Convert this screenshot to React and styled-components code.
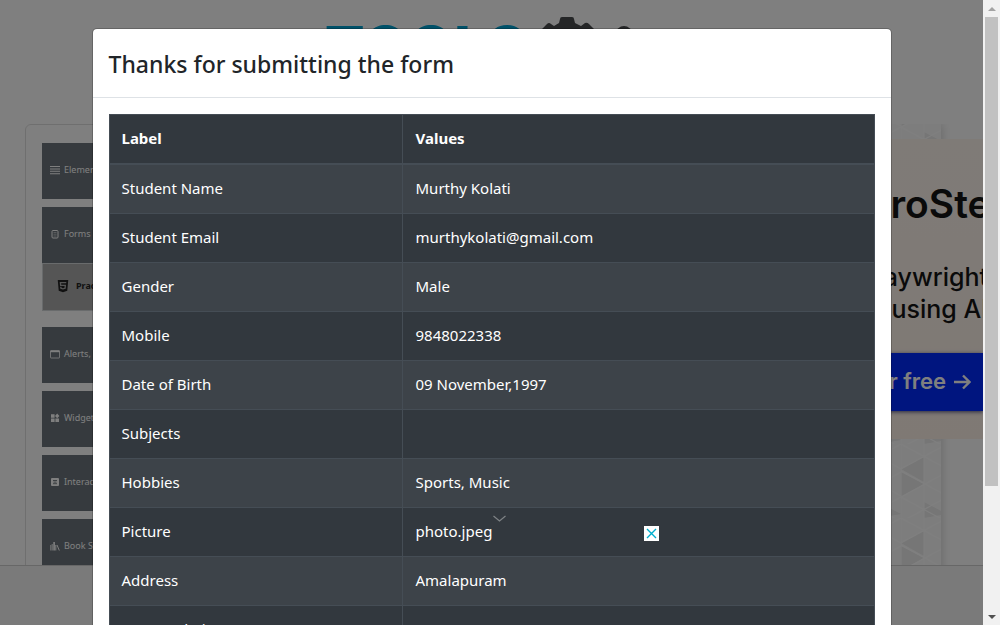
import React from "react";
import styled, { createGlobalStyle } from "styled-components";
import { FaHtml5 } from "react-icons/fa";

const GlobalStyle = createGlobalStyle`
  *, *::before, *::after { box-sizing: border-box; }
  body {
    margin: 0;
    font-family: "Noto Sans", "Open Sans", sans-serif;
    font-size: 15px;
    line-height: 24px;
    color: #212529;
    background: #fff;
  }
`;

const Window = styled.div`
  display: grid;
  grid-template-columns: minmax(0, 1fr) 17px;
  height: 100vh;
  overflow: hidden;
`;

const Viewport = styled.div`
  position: relative;
  overflow: hidden;
`;

const Page = styled.div`
  display: flex;
  flex-direction: column;
  height: 100%;
`;

const SiteHeader = styled.header`
  display: flex;
  justify-content: center;
  flex: none;
  height: 124px;
  padding: 16px 12px 0 0;
`;

const Brand = styled.a`
  display: flex;
  align-items: flex-start;
  color: #00a3d2;
  text-decoration: none;
  font: 800 59px/64px Inter, sans-serif;
`;

const BrandMark = styled.svg`
  width: 104px;
  height: 60px;
  margin-left: 16px;
`;

const Main = styled.main`
  display: grid;
  grid-template-columns: minmax(0, 1fr) 240px;
  flex: 1;
  min-height: 0;
  overflow: hidden;
  padding-left: 25px;
`;

const Card = styled.nav`
  height: 900px;
  padding: 18px 16px;
  border: 1px solid #dfdfdf;
  border-radius: 6px;
`;

const Menu = styled.ul`
  display: flex;
  flex-direction: column;
  gap: 8px;
  width: 240px;
  margin: 0;
  padding: 0;
  list-style: none;
`;

const MenuGroup = styled.li`
  padding-bottom: ${(p) => (p.$open ? "8px" : "0")};
`;

const MenuButton = styled.button`
  display: flex;
  align-items: center;
  gap: 4px;
  width: 100%;
  height: 56px;
  padding: 0 8px 2px;
  border: 0;
  background: #6c757c;
  color: #fff;
  font: 400 9px/16px "Noto Sans", sans-serif;
  text-align: left;

  svg { width: 10px; height: 10px; }
`;

const SubLink = styled.a`
  display: flex;
  align-items: center;
  gap: 6px;
  height: 48px;
  padding: 0 13px 2px;
  border: 1px solid #d3d6d8;
  background: #aaa;
  color: #222;
  font: 700 9px/16px "Noto Sans", sans-serif;
  text-decoration: none;

  svg { width: 14px; height: 14px; }
`;

const SideAd = styled.aside`
  position: relative;
  padding-top: 15px;
  overflow: hidden;
`;

const Skin = styled.div`
  position: absolute;
  inset: 0 42px 0 0;
  box-shadow: 0 0 10px rgba(0, 0, 0, 0.2);

  svg { display: block; width: 100%; height: 100%; background: #fbfbfb; }
`;

const Creative = styled.section`
  position: relative;
  height: 300px;
  padding-top: 41px;
  background: linear-gradient(#fff6ef, #fff3e9);
  color: #151515;
  font-family: Inter, sans-serif;
  text-align: right;
  white-space: nowrap;
`;

const CreativeTitle = styled.h2`
  width: 272px;
  margin: 0 0 33px;
  font-size: 39px;
  line-height: 48px;
  font-weight: 600;
`;

const CreativeText = styled.p`
  width: 245px;
  margin: 0 0 28px;
  font-size: 25px;
  line-height: 32px;
  font-weight: 500;
`;

const CreativeLink = styled.a`
  display: block;
  height: 58px;
  padding-right: 12px;
  background: #002aff;
  box-shadow: 0 1px 4px #4d5080;
  color: #fff;
  font-size: 22px;
  line-height: 56px;
  font-weight: 600;
  text-decoration: none;

  svg { margin-left: 8px; vertical-align: -1px; }
`;

const SiteFooter = styled.footer`
  flex: none;
  height: 60px;
  border-top: 1px solid #cfcfcf;
  background: #f5f5f5;
`;

const Backdrop = styled.div`
  position: absolute;
  inset: 0;
  padding: 28px 16px;
  overflow: hidden;
  background: rgba(0, 0, 0, 0.5);
`;

const Dialog = styled.div`
  max-width: 800px;
  margin: 0 auto;
  border: 1px solid rgba(0, 0, 0, 0.2);
  border-radius: 5px;
  background: #fff;
  background-clip: padding-box;
`;

const DialogHeader = styled.header`
  padding: 17px 16px 15px;
  border-bottom: 1px solid #dee2e6;
`;

const DialogTitle = styled.h1`
  margin: 0;
  font-size: 23px;
  line-height: 36px;
  font-weight: 500;
`;

const DialogBody = styled.div`
  padding: 16px;
`;

const ResultTable = styled.table`
  width: 100%;
  border-collapse: collapse;
  table-layout: fixed;
  background: #32383e;
  color: #fff;
  border: 1px solid #454d55;

  th, td {
    padding: 11px 12px 13px;
    border: 1px solid #454d55;
    text-align: left;
    vertical-align: top;
  }
  th + th, td + td { padding-left: 13px; }
  thead th { border-bottom-width: 2px; font-weight: 700; }
  tbody tr:nth-of-type(odd) { background: #3d4349; }
`;

const LabelColumn = styled.col`
  width: 293px;
`;

const AnchorControls = styled.div`
  position: absolute;
  left: 50%;
  bottom: 84px;
  display: flex;
  align-items: flex-end;
  justify-content: space-between;
  width: 167px;
  height: 30px;
`;

const IconButton = styled.button`
  display: grid;
  place-items: center;
  padding: 0;
  border: 0;
  width: 15px;
  height: 15px;
  align-self: ${(p) => (p.$top ? "flex-start" : "flex-end")};
  background: ${(p) => (p.$filled ? "#fff" : "transparent")};
`;

const Scrollbar = styled.div`
  display: flex;
  flex-direction: column;
  background: #f1f1f1;
`;

const ScrollButton = styled.button`
  display: grid;
  place-items: center;
  flex: none;
  height: 17px;
  padding: 0;
  border: 0;
  background: transparent;
  color: ${(p) => (p.$muted ? "#a3a3a3" : "#505050")};
`;

const Track = styled.div`
  flex: 1;
  padding: 0 2px;
`;

const Thumb = styled.div`
  height: 79.4%;
  background: #c1c1c1;
`;

const LinesIcon = () => (
  <svg viewBox="0 0 10 10" fill="currentColor" aria-hidden="true">
    <path d="M0 1h10v1H0zM0 3.400h10v1H0zM0 5.800h10v1H0zM0 8.200h10v1H0z" />
  </svg>
);

const FormIcon = () => (
  <svg viewBox="0 0 10 10" fill="none" stroke="currentColor" aria-hidden="true">
    <rect x="2" y="1.5" width="6" height="7.5" rx="1" />
    <path d="M3.5 3.5h3M3.5 5.2h3M3.5 7h3" strokeWidth=".5" />
  </svg>
);

const WindowIcon = () => (
  <svg viewBox="0 0 10 10" fill="none" stroke="currentColor" strokeWidth=".8" aria-hidden="true">
    <rect x=".5" y="1.5" width="9" height="7.5" rx=".5" />
    <path d="M.5 2.5h9" strokeWidth="1.4" />
  </svg>
);

const WidgetsIcon = () => (
  <svg viewBox="0 0 10 10" fill="currentColor" aria-hidden="true">
    <path d="M1 1.200h3.600v3.600H1zM1 5.400h3.600V9H1zM5.400 5.400H9V9H5.400zM7.200.6 9.400 3 7.200 5.200 5 3z" />
  </svg>
);

const InteractionIcon = () => (
  <svg viewBox="0 0 10 10" aria-hidden="true">
    <rect x="1" y="1" width="8" height="8" rx="1" fill="currentColor" />
    <path d="M3 3.500h4M3 6.700h4M3.500 5.100h3" fill="none" stroke="#6c757c" strokeWidth=".9" />
  </svg>
);

const BooksIcon = () => (
  <svg viewBox="0 0 10 10" fill="none" stroke="currentColor" aria-hidden="true">
    <path d="M.8 4v5.500M2.200 3v6.500" strokeWidth=".9" />
    <path d="M4.100 1v8.500" strokeWidth="1.6" />
    <path d="M5.800 4v5.500M7 4l2.300 5.500" strokeWidth="1" />
  </svg>
);

const MENU = [
  { label: "Elements", Icon: LinesIcon },
  { label: "Forms", Icon: FormIcon, child: "Practice Form" },
  { label: "Alerts, Frame & Windows", Icon: WindowIcon },
  { label: "Widgets", Icon: WidgetsIcon },
  { label: "Interactions", Icon: InteractionIcon },
  { label: "Book Store Application", Icon: BooksIcon },
];

const RESULTS = [
  ["Student Name", "Murthy Kolati"],
  ["Student Email", "murthykolati@gmail.com"],
  ["Gender", "Male"],
  ["Mobile", "9848022338"],
  ["Date of Birth", "09 November,1997"],
  ["Subjects", ""],
  ["Hobbies", "Sports, Music"],
  ["Picture", "photo.jpeg"],
  ["Address", "Amalapuram"],
  ["State and City", ""],
];

const SkinPattern = () => (
  <svg aria-hidden="true">
    <defs>
      <pattern id="facets" x="158" y="320" width="46" height="74" patternUnits="userSpaceOnUse">
        <g fill="#ececec">
          <path d="M0 25 23 12v26z" />
          <path d="M0 28 23 40 0 53z" />
          <path d="M23 58 46 70 23 74z" />
        </g>
        <path
          d="M0 0v74M23 0v74M0 25 46 0M0 27 46 52M0 53 46 28M0 0l46 25M0 78l46-25M0 53l46 25"
          fill="none"
          stroke="#ffffff"
          strokeWidth="1.2"
        />
      </pattern>
    </defs>
    <rect width="100%" height="100%" fill="url(#facets)" />
  </svg>
);

export default function App() {
  return (
    <>
      <GlobalStyle />
      <Window>
        <Viewport>
          <Page>
            <SiteHeader>
              <Brand href="#">
                TOOLS
                <BrandMark viewBox="0 2 104 60" aria-hidden="true">
                  <path
                    fill="#4a4c4e"
                    d="M20 3h10q2 0 2 2l1 4 6 3 4-3q2-1 4 1l5 5v6l4 7-4 20-14 8H12L0 43V21l0-6 5-5q2-2 4 0l3 2 5-3 1-4q0-2 2-2z"
                  />
                  <circle cx="82" cy="20" r="8" fill="#4a4c4e" />
                </BrandMark>
              </Brand>
            </SiteHeader>
            <Main>
              <Card>
                <Menu>
                  {MENU.map(({ label, Icon, child }) => (
                    <MenuGroup key={label} $open={Boolean(child)}>
                      <MenuButton type="button">
                        <Icon />
                        {label}
                      </MenuButton>
                      {child && (
                        <SubLink href="#">
                          <FaHtml5 />
                          {child}
                        </SubLink>
                      )}
                    </MenuGroup>
                  ))}
                </Menu>
              </Card>
              <SideAd>
                <Skin>
                  <SkinPattern />
                </Skin>
                <Creative>
                  <CreativeTitle>ZeroStep</CreativeTitle>
                  <CreativeText>
                    Playwright
                    <br />
                    using AI
                  </CreativeText>
                  <CreativeLink href="#">
                    Try for free
                    <svg width="17" height="16" viewBox="0 0 17 16" fill="none" stroke="currentColor" strokeWidth="2.4" aria-hidden="true">
                      <path d="M0 8h15M9 1.500 15.500 8 9 14.500" />
                    </svg>
                  </CreativeLink>
                </Creative>
              </SideAd>
            </Main>
            <SiteFooter />
          </Page>

          <Backdrop>
            <Dialog role="dialog" aria-labelledby="result-title">
              <DialogHeader>
                <DialogTitle id="result-title">Thanks for submitting the form</DialogTitle>
              </DialogHeader>
              <DialogBody>
                <ResultTable>
                  <colgroup>
                    <LabelColumn />
                    <col />
                  </colgroup>
                  <thead>
                    <tr>
                      <th>Label</th>
                      <th>Values</th>
                    </tr>
                  </thead>
                  <tbody>
                    {RESULTS.map(([label, value]) => (
                      <tr key={label}>
                        <td>{label}</td>
                        <td>{value}</td>
                      </tr>
                    ))}
                  </tbody>
                </ResultTable>
              </DialogBody>
            </Dialog>
          </Backdrop>

          <AnchorControls>
            <IconButton type="button" aria-label="Collapse" $top>
              <svg width="13" height="8" viewBox="0 0 13 8" fill="none" stroke="#7f8386" strokeWidth="1.2" aria-hidden="true">
                <path d="m.5 1 6 5 6-5" />
              </svg>
            </IconButton>
            <IconButton type="button" aria-label="Close" $filled>
              <svg width="15" height="15" viewBox="0 0 15 15" fill="none" stroke="#00aecd" strokeWidth="1.4" aria-hidden="true">
                <path d="m3 3 9 9m0-9-9 9" />
              </svg>
            </IconButton>
          </AnchorControls>
        </Viewport>

        <Scrollbar>
          <ScrollButton type="button" aria-label="Scroll up" $muted>
            <svg width="8" height="4" viewBox="0 0 8 4" fill="currentColor" aria-hidden="true">
              <path d="M4 0 8 4H0z" />
            </svg>
          </ScrollButton>
          <Track>
            <Thumb />
          </Track>
          <ScrollButton type="button" aria-label="Scroll down">
            <svg width="8" height="4" viewBox="0 0 8 4" fill="currentColor" aria-hidden="true">
              <path d="M0 0h8L4 4z" />
            </svg>
          </ScrollButton>
        </Scrollbar>
      </Window>
    </>
  );
}
